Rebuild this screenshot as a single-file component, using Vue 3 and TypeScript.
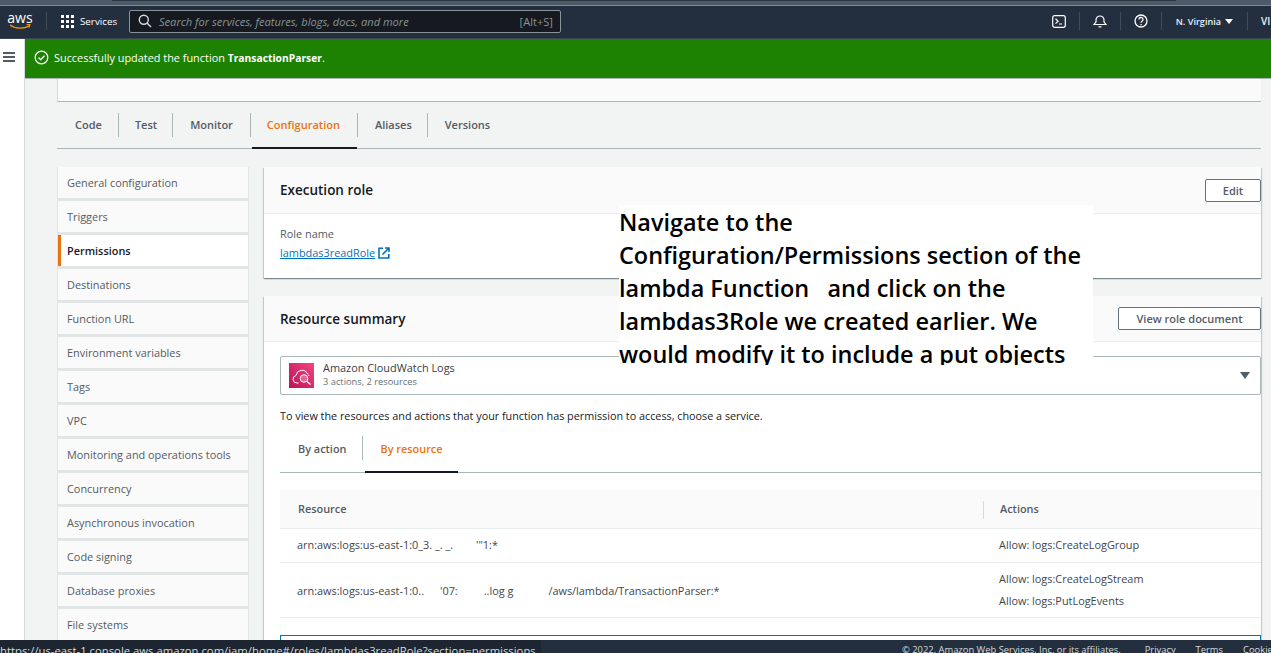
<script setup lang="ts">
const tabs = ['Code', 'Test', 'Monitor', 'Configuration', 'Aliases', 'Versions']
const sideItems = [
  'General configuration',
  'Triggers',
  'Permissions',
  'Destinations',
  'Function URL',
  'Environment variables',
  'Tags',
  'VPC',
  'Monitoring and operations tools',
  'Concurrency',
  'Asynchronous invocation',
  'Code signing',
  'Database proxies',
  'File systems'
]
</script>

<template>
  <div class="page">
    <div class="top-strip"><div class="strip-dark"></div></div>

    <!-- top nav -->
    <header class="nav">
      <div class="logo">
        <span class="logo-text">aws</span>
        <svg class="smile" width="22" height="6" viewBox="0 0 22 6">
          <path d="M1 1c5 4 14 4 19 1" fill="none" stroke="#f90" stroke-width="1.4" />
          <path d="M17.500 .8l3.400-.3-.9 3.200" fill="none" stroke="#f90" stroke-width="1.1" />
        </svg>
      </div>
      <span class="nav-sep logo-sep"></span>
      <svg class="grid-icon" width="13" height="13" viewBox="0 0 13 13" fill="#fff">
        <rect x="0" y="0" width="3" height="3" /><rect x="5" y="0" width="3" height="3" /><rect x="10" y="0" width="3" height="3" />
        <rect x="0" y="5" width="3" height="3" /><rect x="5" y="5" width="3" height="3" /><rect x="10" y="5" width="3" height="3" />
        <rect x="0" y="10" width="3" height="3" /><rect x="5" y="10" width="3" height="3" /><rect x="10" y="10" width="3" height="3" />
      </svg>
      <span class="services">Services</span>
      <div class="search">
        <svg width="14" height="14" viewBox="0 0 14 14" fill="none" stroke="#d5dbdb" stroke-width="1.400">
          <circle cx="5.800" cy="5.800" r="4.500" />
          <path d="M9 9l4 4" />
        </svg>
        <span class="search-text">Search for services, features, blogs, docs, and more</span>
        <span class="search-key">[Alt+S]</span>
      </div>
      <div class="nav-right">
        <svg class="nav-icon" width="14" height="13" viewBox="0 0 14 13" fill="none" stroke="#fff" stroke-width="1.200">
          <rect x=".7" y=".7" width="12.600" height="11.600" rx="2" />
          <path d="M3.500 3.800l2.600 2.400-2.600 2.400M7 9h3" />
        </svg>
        <span class="nav-sep"></span>
        <svg class="nav-icon" width="14" height="14" viewBox="0 0 14 14" fill="none" stroke="#fff" stroke-width="1.200">
          <path d="M1 10.500h12l-2-2.500V6a4 4 0 0 0-8 0v2z" />
          <path d="M5.500 12.800h3" />
        </svg>
        <span class="nav-sep"></span>
        <svg class="nav-icon" width="14" height="14" viewBox="0 0 14 14" fill="none" stroke="#fff" stroke-width="1.300">
          <circle cx="7" cy="7" r="6" />
          <path d="M5 5.500a2 2 0 1 1 3 1.700c-.7.400-1 .8-1 1.600M7 10v1.200" />
        </svg>
        <span class="nav-sep"></span>
        <span class="region">N. Virginia</span>
        <span class="caret"></span>
        <span class="nav-sep"></span>
        <span class="account">VI</span>
      </div>
    </header>

    <div class="body">
      <!-- collapsed side nav -->
      <aside class="rail">
        <svg width="12" height="10" viewBox="0 0 12 10" fill="#545b64">
          <rect x="0" y="0" width="12" height="2" />
          <rect x="0" y="4" width="12" height="2" />
          <rect x="0" y="8" width="12" height="2" />
        </svg>
      </aside>

      <div class="main">
        <div class="flash">
          <svg width="15" height="15" viewBox="0 0 15 15" fill="none" stroke="#fff" stroke-width="1.300">
            <circle cx="7.500" cy="7.500" r="6.300" />
            <path d="M4.500 7.500l2.200 2.200 3.800-4" />
          </svg>
          <span>Successfully updated the function <b>TransactionParser</b>.</span>
        </div>

        <div class="content">
          <div class="top-card"></div>

          <nav class="tabs">
            <div
              v-for="t in tabs"
              :key="t"
              :class="['tab', { 'tab--active': t === 'Configuration' }]"
            >
              <span>{{ t }}</span>
            </div>
          </nav>

          <div class="columns">
            <ul class="side">
              <li
                v-for="s in sideItems"
                :key="s"
                :class="['side-item', { 'side-item--active': s === 'Permissions' }]"
              >
                {{ s }}
              </li>
            </ul>

            <div class="panels">
              <section class="card role-card">
                <div class="card-head">
                  <h2>Execution role</h2>
                  <button class="btn btn--edit">Edit</button>
                </div>
                <div class="role-body">
                  <div class="role-label">Role name</div>
                  <a class="role-link">
                    <span>lambdas3readRole</span>
                    <svg width="12" height="12" viewBox="0 0 12 12" fill="none" stroke="#0073bb" stroke-width="1.600">
                      <path d="M5 1.200H1v9.800h9.800V7" />
                      <path d="M4.500 7.500l6-6M7 1h4v4" />
                    </svg>
                  </a>
                </div>
              </section>

              <section class="card summary-card">
                <div class="card-head summary-head">
                  <h2>Resource summary</h2>
                  <button class="btn btn--doc">View role document</button>
                </div>
                <div class="summary-body">
                  <div class="select">
                    <div class="service-icon">
                      <svg width="25" height="25" viewBox="0 0 25 25" fill="none" stroke="#fff" stroke-width="1">
                        <path d="M9.500 20H8a3.800 3.800 0 0 1-1-7.500 6 6 0 0 1 11.500-1.500 4 4 0 0 1 1.500 2" />
                        <circle cx="15" cy="15.500" r="3.800" fill="#f8a9c6" fill-opacity=".45" />
                        <path d="M18 18.500l3.500 3" stroke-width="1.400" />
                      </svg>
                    </div>
                    <div class="service-text">
                      <div class="service-name">Amazon CloudWatch Logs</div>
                      <div class="service-sub">3 actions, 2 resources</div>
                    </div>
                    <span class="select-caret"></span>
                  </div>

                  <p class="hint">To view the resources and actions that your function has permission to access, choose a service.</p>

                  <div class="sub-tabs">
                    <div class="sub-tab"><span>By action</span></div>
                    <div class="sub-tab sub-tab--active"><span>By resource</span></div>
                  </div>

                  <div class="table">
                    <div class="row row--head">
                      <div class="col-res">Resource</div>
                      <div class="col-act">Actions</div>
                    </div>
                    <div class="row row--one">
                      <div class="col-res">arn:aws:logs:us-east-1:0_3. _. _.<span class="gap-a"></span>'"1:*</div>
                      <div class="col-act">Allow: logs:CreateLogGroup</div>
                    </div>
                    <div class="row row--two">
                      <div class="col-res">arn:aws:logs:us-east-1:0..<span class="gap-b"></span>'07:<span class="gap-c"></span>..log g<span class="gap-d"></span>/aws/lambda/TransactionParser:*</div>
                      <div class="col-act col-act--stack">
                        <span>Allow: logs:CreateLogStream</span>
                        <span>Allow: logs:PutLogEvents</span>
                      </div>
                    </div>
                  </div>

                  <div class="blue-box"></div>
                </div>
              </section>
            </div>
          </div>
        </div>
      </div>
    </div>

    <!-- slide annotation over the console -->
    <div class="note">
      Navigate to the Configuration/Permissions section of the lambda Function &nbsp; and click on the lambdas3Role we created earlier. We would modify it to include a put objects
    </div>

    <footer class="footer">
      <span class="copyright">© 2022, Amazon Web Services, Inc. or its affiliates.</span>
      <span class="foot-link foot-privacy">Privacy</span>
      <span class="foot-link">Terms</span>
      <span class="foot-link">Cookie preferences</span>
    </footer>
    <div class="url-tip">https://us-east-1.console.aws.amazon.com/iam/home#/roles/lambdas3readRole?section=permissions</div>
  </div>
</template>

<style>
html,
body {
  margin: 0;
  padding: 0;
  overflow: hidden;
}
</style>

<style scoped>
.page {
  position: relative;
  width: 1271px;
  height: 653px;
  overflow: hidden;
  display: flex;
  flex-direction: column;
  background: #f2f3f3;
  font-family: "Open Sans", "Liberation Sans", sans-serif;
  font-size: 10.9px;
  color: #16191f;
}

.top-strip {
  height: 6px;
  flex: none;
  background: #4c5b67;
  border-bottom: 1px solid #7d8a94;
  box-sizing: border-box;
}

.strip-dark {
  width: 1064px;
  height: 1px;
  margin-left: 112px;
  background: #2b3640;
}

/* 顶部导航 */
.nav {
  height: 33px;
  flex: none;
  display: flex;
  align-items: center;
  background: #232f3e;
  border-bottom: 1px solid #3b4550;
  box-sizing: border-box;
  color: #fff;
  padding: 0 0 2px 8px;
}

.logo {
  width: 24px;
  display: flex;
  flex-direction: column;
  align-items: center;
  line-height: 12px;
}

.logo-text {
  font-size: 14px;
  height: 12px;
  line-height: 11px;
}

.smile {
  display: block;
}

.nav-sep {
  width: 1px;
  height: 18px;
  background: #414c5a;
}

.logo-sep {
  margin: 0 14px 0 14px;
}

.grid-icon {
  margin-right: 6px;
  margin-left: 0;
}

.services {
  width: 36px;
  font-size: 9.8px;
  margin-right: 13px;
}

.search {
  width: 432px;
  height: 23px;
  box-sizing: border-box;
  display: flex;
  align-items: center;
  background: #16191f;
  border: 1px solid #879596;
  border-radius: 2px;
  padding: 0 7px 0 8px;
  color: #879596;
}

.search-text {
  margin-left: 7px;
  font-style: italic;
  flex: 1;
  font-size: 11.1px;
}

.search-key {
  font-size: 11.1px;
}

.nav-right {
  margin-left: auto;
  display: flex;
  align-items: center;
}

.nav-icon {
  margin: 0 13px;
}

.region {
  font-size: 9.1px;
  font-weight: 600;
  margin-left: 14px;
  color: #e6f3ff;
}

.caret {
  width: 0;
  height: 0;
  margin: 0 14px 0 4px;
  border-left: 4px solid transparent;
  border-right: 4px solid transparent;
  border-top: 5px solid #fff;
}

.account {
  margin-left: 13px;
  font-size: 10px;
  font-weight: 600;
  color: #e6f3ff;
  width: 10px;
}

.body {
  flex: 1;
  display: flex;
  min-height: 0;
}

.rail {
  width: 25px;
  flex: none;
  box-sizing: border-box;
  background: #fff;
  border-right: 1px solid #d5dbdb;
  padding: 11px 0 0 3px;
}

.main {
  flex: 1;
  min-width: 0;
  display: flex;
  flex-direction: column;
}

.flash {
  height: 40px;
  flex: none;
  display: flex;
  align-items: center;
  gap: 5px;
  box-sizing: border-box;
  background: #1d8102;
  border-bottom: 1px solid #aab7b8;
  color: #fff;
  padding-left: 9px;
  font-size: 10.9px;
  padding-bottom: 3px;
}

.flash svg {
  margin-top: 1px;
}

.flash b {
  font-weight: 700;
  font-size: 10.3px;
}

.content {
  padding: 0 10px 0 32px;
}

.top-card {
  height: 22px;
  background: #fafafa;
  border-bottom: 1px solid #aab7b8;
  border-left: 1px solid #d5dbdb;
}

/* 标签页 */
.tabs {
  display: flex;
  height: 47px;
  box-sizing: border-box;
  border-bottom: 1px solid #aab7b8;
}

.tab {
  display: flex;
  align-items: center;
  position: relative;
  font-size: 11px;
  font-weight: 600;
  color: #545b64;
}

.tab + .tab::before {
  content: "";
  position: absolute;
  left: 0;
  top: 11px;
  height: 24px;
  width: 1px;
  background: #aab7b8;
}

.tab--active {
  color: #ec7211;
}

.tab--active::after {
  content: "";
  position: absolute;
  left: 2px;
  right: 0;
  bottom: -1px;
  height: 2px;
  background: #16191f;
}

.tab:nth-child(1) { padding: 0 16px 2px 18px; }
.tab:nth-child(2) { padding: 0 15px 2px 17px; }
.tab:nth-child(3) { padding: 0 17px 2px 18px; }
.tab:nth-child(4) { padding: 0 17px 2px 17px; }
.tab:nth-child(5) { padding: 0 15px 2px 18px; }
.tab:nth-child(6) { padding: 0 0 2px 18px; }

.columns {
  display: flex;
  gap: 15px;
  margin-top: 18px;
  align-items: flex-start;
}

/* 左侧菜单 */
.side {
  width: 192px;
  flex: none;
  margin: 0;
  padding: 0 1px;
  list-style: none;
  display: flex;
  flex-direction: column;
  gap: 3px;
  background: #e1e5e5;
  box-sizing: border-box;
}

.side-item {
  height: 31px;
  display: flex;
  align-items: center;
  box-sizing: border-box;
  padding-left: 9px;
  background: #fafafa;
  color: #545b64;
}

.side-item--active {
  background: #fff;
  color: #16191f;
  font-weight: 600;
  border-left: 3px solid #ec7211;
  padding-left: 6px;
}

.panels {
  flex: 1;
  min-width: 0;
  display: flex;
  flex-direction: column;
  gap: 18px;
}

.card {
  background: #fff;
  box-shadow: 0 1px 1px 0 rgba(0, 28, 36, 0.3), 1px 1px 1px 0 rgba(0, 28, 36, 0.15), -1px 1px 1px 0 rgba(0, 28, 36, 0.15);
}

.card-head {
  height: 47px;
  box-sizing: border-box;
  display: flex;
  align-items: center;
  justify-content: space-between;
  background: #fafafa;
  border-bottom: 1px solid #eaeded;
  padding: 0 0 0 16px;
}

.card-head h2 {
  margin: 0;
  font-size: 13.5px;
  font-weight: 600;
  color: #16191f;
}

.btn {
  height: 23px;
  background: #fff;
  border: 1px solid #687078;
  border-radius: 2px;
  color: #545b64;
  font-family: inherit;
  font-size: 11px;
  font-weight: 600;
}

.btn--edit {
  width: 56px;
}

.btn--doc {
  width: 143px;
}

.role-body {
  padding: 12px 16px 0;
  height: 64px;
  box-sizing: border-box;
}

.role-label {
  color: #545b64;
  line-height: 15px;
}

.role-link {
  display: flex;
  align-items: center;
  gap: 3px;
  margin-top: 4px;
  color: #0073bb;
  line-height: 15px;
}

.role-link span {
  text-decoration: underline;
}

.summary-head {
  height: 46px;
}

.summary-body {
  padding: 14px 0 0 16px;
  background: #fff;
}

.select {
  height: 39px;
  box-sizing: border-box;
  display: flex;
  align-items: center;
  border: 1px solid #aab7b8;
  border-radius: 2px;
  padding: 0 0 0 8px;
}

.service-icon {
  width: 25px;
  height: 25px;
  display: flex;
  align-items: center;
  justify-content: center;
  background: linear-gradient(45deg, #bc1356, #f34482);
  margin-right: 9px;
}

.service-text {
  padding-bottom: 2px;
}

.service-name {
  line-height: 14px;
  color: #3a4048;
}

.service-sub {
  font-size: 9.3px;
  color: #687078;
  line-height: 13px;
}

.select-caret {
  margin-left: auto;
  margin-right: 10px;
  width: 0;
  height: 0;
  border-left: 5px solid transparent;
  border-right: 5px solid transparent;
  border-top: 7px solid #545b64;
}

.hint {
  margin: 13px 0 0;
  font-size: 10.8px;
  line-height: 15px;
  color: #16191f;
}

.sub-tabs {
  display: flex;
  height: 37px;
  margin-top: 13px;
  box-sizing: border-box;
  border-bottom: 1px solid #aab7b8;
}

.sub-tab {
  display: flex;
  align-items: center;
  position: relative;
  font-weight: 600;
  color: #545b64;
  padding: 0 16px 11px 18px;
}

.sub-tab--active {
  color: #ec7211;
  margin-left: 3px;
  padding: 0 15px 11px 15px;
}

.sub-tab--active::before {
  content: "";
  position: absolute;
  left: -3px;
  top: 0;
  height: 24px;
  width: 1px;
  background: #aab7b8;
}

.sub-tab--active::after {
  content: "";
  position: absolute;
  left: 0;
  right: 0;
  bottom: -1px;
  height: 2px;
  background: #16191f;
}

.table {
  margin-top: 17px;
}

.row {
  display: flex;
  align-items: center;
  border-bottom: 1px solid #eaeded;
  box-sizing: border-box;
}

.row--head {
  height: 39px;
  padding-bottom: 2px;
  background: #fafafa;
  font-weight: 600;
  color: #545b64;
}

.row--one {
  height: 34px;
  padding-bottom: 2px;
}

.row--two {
  height: 55px;
}

.col-res {
  width: 703px;
  flex: none;
  padding-left: 17px;
  box-sizing: border-box;
  color: #3f464e;
}

.row--head .col-res {
  color: #545b64;
  padding-left: 18px;
}

.col-act {
  flex: 1;
  padding-left: 16px;
  color: #3f464e;
  position: relative;
}

.row--head .col-act::before {
  content: "";
  position: absolute;
  left: 0;
  top: 0;
  height: 18px;
  width: 1px;
  background: #d5dbdb;
}

.row--head .col-act {
  color: #545b64;
  padding-left: 17px;
}

.col-act--stack {
  display: flex;
  flex-direction: column;
  gap: 7px;
  padding-bottom: 2px;
}

.gap-a { display: inline-block; width: 23px; }
.gap-b { display: inline-block; width: 16px; }
.gap-c { display: inline-block; width: 26px; }
.gap-d { display: inline-block; width: 35px; }

.blue-box {
  height: 30px;
  margin-top: 17px;
  box-sizing: border-box;
  border: 1px solid #0073bb;
}

/* 覆盖说明文字 */
.note {
  position: absolute;
  left: 619px;
  top: 205px;
  width: 474px;
  height: 160px;
  overflow: hidden;
  padding-top: 1px;
  box-sizing: border-box;
  background: #fff;
  color: #000;
  font-family: "Open Sans", sans-serif;
  font-size: 23.45px;
  font-weight: 600;
  line-height: 33px;
}

.footer {
  position: absolute;
  left: 0;
  right: 0;
  bottom: 0;
  height: 13px;
  display: flex;
  padding-left: 902px;
  background: #232f3e;
  color: #d5dbdb;
  font-size: 9.4px;
  line-height: 20px;
  white-space: nowrap;
}

.foot-link {
  margin-left: 20px;
}

.foot-privacy {
  margin-left: 24px;
}

.url-tip {
  position: absolute;
  left: 0;
  bottom: 0;
  width: 541px;
  height: 13px;
  overflow: hidden;
  background: #1c2530;
  color: #d5dbdb;
  font-size: 11.3px;
  line-height: 22px;
  border-top-right-radius: 3px;
  white-space: nowrap;
}
</style>
